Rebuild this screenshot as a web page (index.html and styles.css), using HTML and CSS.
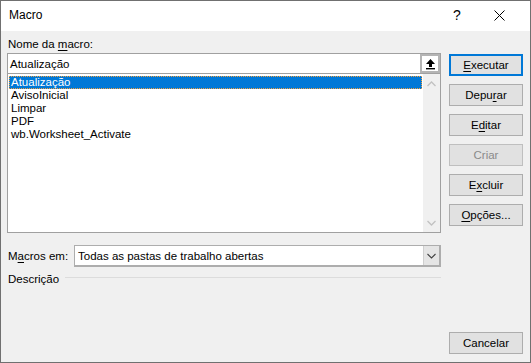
FILE: index.html
```html
<!DOCTYPE html>
<html lang="pt">
<head>
<meta charset="utf-8">
<title>Macro</title>
<link rel="stylesheet" href="styles.css">
</head>
<body>
<div class="dialog">
  <div class="titlebar">
    <span class="title">Macro</span>
    <div class="tb-buttons">
      <span class="help">?</span>
      <svg class="close" width="11" height="11" viewBox="0 0 11 11"><path d="M0.5 0.5 L10.5 10.5 M10.5 0.5 L0.5 10.5" stroke="#000" stroke-width="1" fill="none"/></svg>
    </div>
  </div>
  <div class="body">
    <div class="left">
      <div class="label">Nome da <u>m</u>acro:</div>
      <div class="namebox">
        <span class="nametext">Atualização</span>
        <span class="upbtn"><svg width="11" height="12" viewBox="0 0 11 12"><path d="M5.5 1 L10 6 L7 6 L7 9 L4 9 L4 6 L1 6 Z" fill="#000"/><rect x="1" y="10" width="9" height="1.4" fill="#000"/></svg></span>
      </div>
      <div class="list">
        <ul class="items">
          <li class="sel">Atualização</li>
          <li>AvisoInicial</li>
          <li>Limpar</li>
          <li>PDF</li>
          <li>wb.Worksheet_Activate</li>
        </ul>
        <div class="scrollbar">
          <svg width="9" height="6" viewBox="0 0 9 6"><path d="M0.5 5 L4.5 1 L8.5 5" stroke="#c2c2c2" stroke-width="1.3" fill="none"/></svg>
          <svg width="9" height="6" viewBox="0 0 9 6"><path d="M0.5 1 L4.5 5 L8.5 1" stroke="#c2c2c2" stroke-width="1.3" fill="none"/></svg>
        </div>
      </div>
      <div class="macros-row">
        <span class="label2">M<u>a</u>cros em:</span>
        <div class="combo">
          <span class="combotext">Todas as pastas de trabalho abertas</span>
          <span class="drop"><svg width="9" height="6" viewBox="0 0 9 6"><path d="M0.5 1 L4.5 5 L8.5 1" stroke="#404040" stroke-width="1.1" fill="none"/></svg></span>
        </div>
      </div>
      <div class="desc-row">
        <span>Descrição</span>
        <span class="rule"></span>
      </div>
    </div>
    <div class="right">
      <div class="btn default"><u>E</u>xecutar</div>
      <div class="btn">Depu<u>r</u>ar</div>
      <div class="btn">E<u>d</u>itar</div>
      <div class="btn disabled">Criar</div>
      <div class="btn">E<u>x</u>cluir</div>
      <div class="btn"><u>O</u>pções...</div>
      <div class="btn cancel">Cancelar</div>
    </div>
  </div>
</div>
</body>
</html>
```
FILE: styles.css
```css
* { box-sizing: border-box; }
html, body { margin: 0; padding: 0; }
body {
  font-family: "Liberation Sans", Arial, sans-serif;
  font-size: 11.5px;
  color: #000;
  background: #f0f0f0;
}
u { text-decoration: underline; text-underline-offset: 2px; text-decoration-thickness: 1px; }
.dialog {
  width: 531px;
  height: 363px;
  border: 1px solid #707070;
  background: #f0f0f0;
  display: flex;
  flex-direction: column;
}
.titlebar {
  height: 30px;
  background: #fff;
  display: flex;
  align-items: center;
  justify-content: space-between;
  padding-left: 8px;
  flex: none;
}
.title { font-size: 12px; position: relative; top: -1px; }
.tb-buttons { display: flex; align-items: center; }
.help { font-size: 14px; width: 12px; text-align: center; position: relative; top: -1px; }
.close { margin: 0 25px 0 31px; position: relative; top: -1px; }
.body {
  flex: 1;
  display: flex;
  gap: 8px;
  padding: 4px 7px 8px 6px;
}
.left {
  width: 434px;
  display: flex;
  flex-direction: column;
}
.label { height: 18px; line-height: 18px; padding-left: 1px; }
.namebox {
  height: 21px;
  border: 1px solid #a0a0a0;
  background: #fff;
  display: flex;
  align-items: center;
  justify-content: space-between;
}
.nametext { padding-left: 2px; }
.upbtn {
  width: 20px;
  height: 19px;
  border: 2px solid #b4b4b4;
  background: #fff;
  display: flex;
  align-items: center;
  justify-content: center;
}
.list {
  margin-top: -1px;
  height: 160px;
  border: 1px solid #a0a0a0;
  background: #fff;
  display: flex;
  justify-content: space-between;
}
.items {
  list-style: none;
  margin: 0;
  padding: 2px 1px 0 1px;
  flex: 1;
}
.items li {
  height: 13px;
  line-height: 13px;
  padding-left: 2px;
  white-space: nowrap;
}
.items li.sel {
  background: #0078d7;
  color: #fff;
  outline: 1px dotted #f0a040;
  outline-offset: -1px;
}
.scrollbar {
  width: 17px;
  background: #f0f0f0;
  display: flex;
  flex-direction: column;
  justify-content: space-between;
  align-items: center;
  padding: 7px 0 6px;
}
.macros-row {
  margin-top: 12px;
  display: flex;
  align-items: center;
}
.label2 { width: 67px; padding-left: 1px; }
.combo {
  flex: 1;
  height: 22px;
  border: 2px solid #adadad;
  border-left-width: 1px;
  border-top-width: 1px;
  background: #fff;
  display: flex;
  align-items: center;
  justify-content: space-between;
}
.combotext { padding-left: 3px; }
.drop {
  width: 16px;
  height: 100%;
  background: #e5e5e5;
  border-left: 1px solid #d0d0d0;
  display: flex;
  align-items: center;
  justify-content: center;
}
.desc-row {
  margin-top: 3px;
  height: 18px;
  display: flex;
  align-items: center;
  gap: 6px;
  padding-left: 1px;
}
.rule {
  flex: 1;
  height: 1px;
  background: #dcdcdc;
  position: relative;
  top: -2px;
}
.right {
  width: 74px;
  display: flex;
  flex-direction: column;
  gap: 8px;
  padding-top: 19px;
}
.btn {
  height: 22px;
  border: 1px solid #adadad;
  background: #e1e1e1;
  display: flex;
  align-items: center;
  justify-content: center;
}
.btn.default { border: 2px solid #0078d7; }
.btn.disabled { color: #8a8a8a; border-color: #bfbfbf; background: #e1e1e1; }
.btn.cancel { margin-top: auto; }
```
